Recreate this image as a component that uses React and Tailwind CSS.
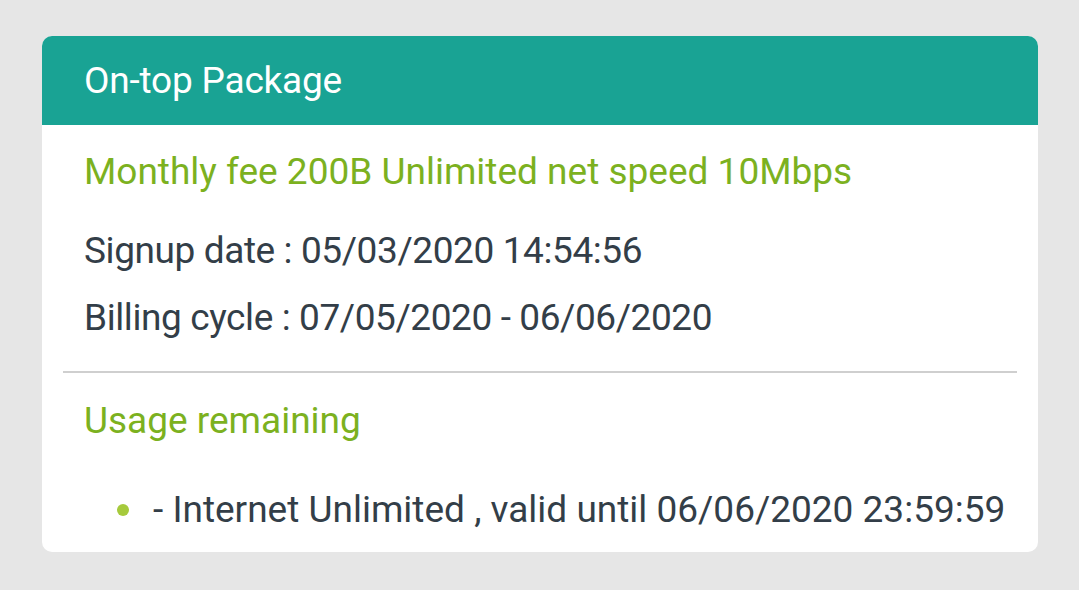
import React from 'react';

const info = [
  { label: 'Signup date', value: '05/03/2020 14:54:56' },
  { label: 'Billing cycle', value: '07/05/2020 - 06/06/2020' },
];

export default function App() {
  return (
    <div
      className="w-[1079px] h-[590px] bg-[#e6e6e6] pt-[36px] pl-[42px]"
      style={{ fontFamily: 'Roboto, "Liberation Sans", sans-serif' }}
    >
      <div className="w-[996px] h-[516px] bg-white rounded-[10px] overflow-hidden flex flex-col">
        <div className="h-[89px] shrink-0 bg-[#19a394] flex items-center px-[42px]">
          <h1 className="text-white text-[37px] leading-none tracking-[-0.2px]">On-top Package</h1>
        </div>
        <div className="px-[42px] pt-[28px]">
          <p className="text-[#7cb11f] text-[37px] leading-none">
            Monthly fee 200B Unlimited net speed 10Mbps
          </p>
          <ul className="mt-[42px] flex flex-col gap-[30px]">
            {info.map((it) => (
              <li key={it.label} className="text-[#333e48] text-[37px] leading-none tracking-[-0.4px]">
                {it.label} : {it.value}
              </li>
            ))}
          </ul>
        </div>
        <div className="mx-[21px] mt-[35px] h-[2px] shrink-0 bg-[#cfcfcf]" />
        <div className="pl-[42px] pt-[29px]">
          <p className="text-[#7cb11f] text-[37px] leading-none">Usage remaining</p>
          <ul className="mt-[52px] pl-[33px]">
            <li className="flex items-center gap-[24px] text-[#333e48] text-[37px] leading-none whitespace-nowrap">
              <span className="w-[12px] h-[12px] shrink-0 rounded-full bg-[#a6ca3c]" aria-hidden="true" />
              <span>- Internet Unlimited , valid until 06/06/2020 23:59:59</span>
            </li>
          </ul>
        </div>
      </div>
    </div>
  );
}
